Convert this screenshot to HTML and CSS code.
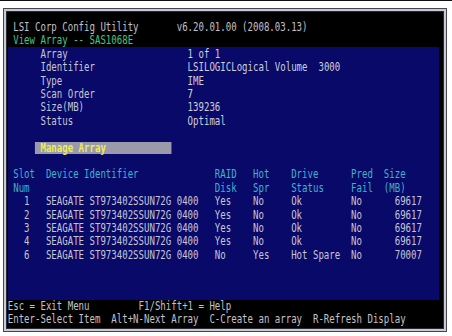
FILE: index.html
```html
<!DOCTYPE html>
<html lang="en">
<head>
  <meta charset="UTF-8" />
  <title>LSI Corp Config Utility | View Array</title>
  <meta name="viewport" content="width=device-width, initial-scale=1.0" />
  <link rel="stylesheet" href="styles.css">
</head>
<body>

  <div class="frame">
    <div class="screen">
      <div class="term">

        <header class="title-bar">
          <div class="line title"> LSI Corp Config Utility       v6.20.01.00 (2008.03.13)</div>
          <div class="line menu-name"> View Array -- SAS1068E</div>
        </header>

        <main class="panel">
          <div class="line">      Array                      <span class="value">1 of 1</span></div>
          <div class="line">      Identifier                 <span class="value">LSILOGICLogical Volume  3000</span></div>
          <div class="line">      Type                       <span class="value">IME</span></div>
          <div class="line">      Scan Order                 <span class="value edit">7</span></div>
          <div class="line">      Size(MB)                   <span class="value">139236</span></div>
          <div class="line">      Status                     <span class="value">Optimal</span></div>
          <div class="line"></div>
          <div class="line"><div class="manage"> Manage Array</div></div>
          <div class="line"></div>

          <div class="line head"> Slot  Device Identifier              RAID   Hot    Drive      Pred  Size</div>
          <div class="line head"> Num                                  Disk   Spr    Status     Fail  (MB)</div>
          <div class="line">   1   SEAGATE ST973402SSUN72G 0400   Yes    No     Ok         No      69617</div>
          <div class="line">   2   SEAGATE ST973402SSUN72G 0400   Yes    No     Ok         No      69617</div>
          <div class="line">   3   SEAGATE ST973402SSUN72G 0400   Yes    No     Ok         No      69617</div>
          <div class="line">   4   SEAGATE ST973402SSUN72G 0400   Yes    No     Ok         No      69617</div>
          <div class="line">   6   SEAGATE ST973402SSUN72G 0400   No     Yes    Hot Spare  No      70007</div>
        </main>

        <footer class="help-bar">
          <div class="line">Esc = Exit Menu         F1/Shift+1 = Help</div>
          <div class="line">Enter-Select Item  Alt+N-Next Array  C-Create an array  R-Refresh Display</div>
        </footer>

      </div>
    </div>
  </div>

</body>
</html>
```

FILE: styles.css
```css
/* Reset & base */
* {
  box-sizing: border-box;
}
html, body {
  margin: 0;
  padding: 0;
  background: #ffffff;
}
body {
  border-top: 1px solid #111;
  height: 336px;
  overflow: hidden;
}

/* Monitor bezel */
.frame {
  margin: 7px 0 0 3px;
  width: 444px;
  height: 324px;
  border: 1px solid #45454d;
  padding: 2px;
  background: #cacad6;
}

.screen {
  height: 100%;
  border: 1px solid #2a2a30;
  background: #000;
  overflow: hidden;
}

/* 80 column text mode, squeezed to the screen width */
.term {
  width: 577px;
  padding-left: 1px;
  transform: scaleX(0.7544);
  transform-origin: 0 0;
  font-family: "DejaVu Sans Mono", "Liberation Mono", monospace;
  font-size: 12px;
  line-height: 13.4px;
  color: #c0c0c8;
}

.line {
  height: 13.4px;
  white-space: pre;
}

/* Top bar */
.title-bar {
  padding-top: 8.6px;
  height: 35.3px;
}
.title {
  color: #c0c0c6;
}
.menu-name {
  color: #44c489;
}

/* Blue panel */
.panel {
  height: 252.7px;
  margin-right: 4px;
  padding-top: 0.6px;
  background: #09096a;
  color: #c6c6d2;
}

.value {
  color: #cfcfd8;
}
.value.edit {
  color: #e2e0b4;
}

.manage {
  margin-left: 5ch;
  width: 25ch;
  height: 12px;
  line-height: 12px;
  background: #9a9aaa;
  color: #ecec5c;
  font-weight: bold;
}

.head {
  color: #3fb2cc;
}

/* Bottom help bar */
.help-bar {
  color: #c2c2ca;
}
```
